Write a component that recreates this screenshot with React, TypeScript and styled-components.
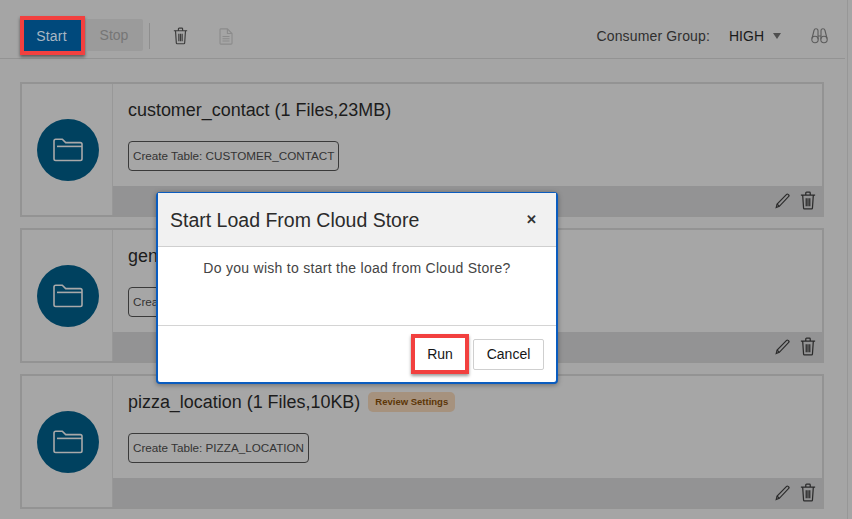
import styled, { createGlobalStyle } from "styled-components";

const jobs = [
  { name: "customer_contact (1 Files,23MB)", table: "CUSTOMER_CONTACT", review: false },
  { name: "generated_data (1 Files,4MB)", table: "GENERATED_DATA", review: false },
  { name: "pizza_location (1 Files,10KB)", table: "PIZZA_LOCATION", review: true },
];

function TrashIcon({ size = 16, stroke = "#2b2b2b" }: { size?: number; stroke?: string }) {
  return (
    <svg width={size} height={size * 1.17} viewBox="0 0 18 21" fill="none" stroke={stroke} strokeWidth="1.4">
      <path d="M1 4.5h16M6.5 4.5V2.2c0-.5.4-.9.9-.9h3.2c.5 0 .9.4.9.9v2.3" />
      <path d="M3 4.5l1 14.6c0 .6.5 1 1 1h8c.5 0 1-.4 1-1l1-14.6" />
      <path d="M7 8v9M9 8v9M11 8v9" />
    </svg>
  );
}

function PencilIcon() {
  return (
    <svg width="15" height="16" viewBox="0 0 15 16" fill="none" stroke="#2b2b2b" strokeWidth="1.2">
      <path d="M1.2 14.6l.9-3.6L11.6 1.3c.4-.4 1-.4 1.4 0l.7.7c.4.4.4 1 0 1.4L4.3 13.3z" />
      <path d="M2.1 11l2.2 2.3" />
    </svg>
  );
}

function FolderIcon() {
  return (
    <svg width="30" height="24" viewBox="0 0 30 24" fill="none" stroke="#a9a9a9" strokeWidth="1.6">
      <path d="M1 3c0-1 .7-1.8 1.7-1.8h6.6l3.4 3.4h14.6c.9 0 1.7.8 1.7 1.7v14.5c0 1-.8 1.7-1.7 1.700H2.7C1.700 22.500 1 21.800 1 20.800z" />
      <path d="M4 8.400h25" />
    </svg>
  );
}

function DocIcon() {
  return (
    <svg width="14" height="17" viewBox="0 0 14 17" fill="none" stroke="#8b8b8b" strokeWidth="1.1">
      <path d="M1 1.800c0-.5.4-.9.9-.9h6.500L13 5.500v9.700c0 .5-.4.9-.9.9H1.900c-.5 0-.9-.4-.9-.9z" />
      <path d="M8.400 1v4.500H13M3.500 8.500h7M3.500 10.800h7M3.500 13h7" />
    </svg>
  );
}

function BinocularsIcon() {
  return (
    <svg width="17" height="16" viewBox="0 0 17 16" fill="none" stroke="#5c5c5c" strokeWidth="1.1">
      <circle cx="4" cy="11.500" r="3.200" />
      <circle cx="13" cy="11.500" r="3.200" />
      <path d="M1 10.500L3 2.500C3.300 1.300 4 .8 5 .8s2 .7 2 2v8.500M16 10.500l-2-8C13.700 1.300 13 .8 12 .8s-2 .7-2 2v8.500M7 8h3" />
    </svg>
  );
}

export default function App() {
  return (
    <>
      <GlobalStyle />
      <Page>
        <Toolbar>
          <StartButton>Start</StartButton>
          <StopButton>Stop</StopButton>
          <Separator />
          <ToolIcon>
            <TrashIcon size={15} stroke="#3c3c3c" />
          </ToolIcon>
          <ToolIcon>
            <DocIcon />
          </ToolIcon>
          <GroupLabel>Consumer Group:</GroupLabel>
          <GroupValue>HIGH</GroupValue>
          <Caret />
          <BinocularsSlot>
            <BinocularsIcon />
          </BinocularsSlot>
        </Toolbar>
        <CardList>
          {jobs.map((job) => (
            <Card key={job.table}>
              <CardSide>
                <FolderCircle>
                  <FolderIcon />
                </FolderCircle>
              </CardSide>
              <CardMain>
                <CardBody>
                  <TitleRow>
                    <CardTitle>{job.name}</CardTitle>
                    {job.review && <ReviewBadge>Review Settings</ReviewBadge>}
                  </TitleRow>
                  <TableTag>Create Table: {job.table}</TableTag>
                </CardBody>
                <CardFooter>
                  <PencilIcon />
                  <TrashIcon />
                </CardFooter>
              </CardMain>
            </Card>
          ))}
        </CardList>
        <Modal>
          <ModalHeader>
            <ModalTitle>Start Load From Cloud Store</ModalTitle>
            <CloseMark>✕</CloseMark>
          </ModalHeader>
          <ModalBody>Do you wish to start the load from Cloud Store?</ModalBody>
          <ModalFooter>
            <RunButton>Run</RunButton>
            <CancelButton>Cancel</CancelButton>
          </ModalFooter>
        </Modal>
      </Page>
    </>
  );
}

const GlobalStyle = createGlobalStyle`
  html, body {
    margin: 0;
    padding: 0;
    background: #a5a5a5;
    font-family: "Liberation Sans", Arial, sans-serif;
  }
`;

const Page = styled.div`
  position: relative;
  width: 848px;
  height: 519px;
  overflow: hidden;
  box-sizing: border-box;
  border-right: 1px solid #979797;
  background: #a5a5a5;
`;

const Toolbar = styled.div`
  display: flex;
  align-items: center;
  box-sizing: border-box;
  height: 59px;
  padding: 14px 20px 0 20px;
  margin-right: 2px;
  border-bottom: 1px solid #939393;
`;

const StartButton = styled.button`
  width: 65px;
  height: 39px;
  margin-top: -1px;
  box-sizing: border-box;
  border: 4px solid #f2403f;
  background: #00497c;
  color: #a9b7c3;
  font: 14px "Liberation Sans", Arial, sans-serif;
  letter-spacing: 0.2px;
  box-shadow: 0 2px 3px rgba(0, 0, 0, 0.45);
  padding: 0 2px 0 0;
`;

const StopButton = styled.button`
  width: 56px;
  height: 32px;
  margin-left: 2px;
  margin-top: -2px;
  border: 0;
  border-radius: 0 2px 2px 0;
  background: #9b9b9b;
  color: #767676;
  font: 14px "Liberation Sans", Arial, sans-serif;
  padding: 0 2px 0 0;
`;

const Separator = styled.div`
  width: 1px;
  height: 26px;
  margin-left: 6px;
  background: #8e8e8e;
`;

const ToolIcon = styled.span`
  display: flex;
  justify-content: center;
  width: 46px;
  margin-left: 0;
  &:first-of-type {
    margin-left: 7px;
  }
`;

const GroupLabel = styled.span`
  margin-left: auto;
  font-size: 14px;
  letter-spacing: 0.15px;
  color: #2f2f2f;
`;

const GroupValue = styled.span`
  margin-left: 19px;
  font-size: 14px;
  color: #1a1a1a;
`;

const Caret = styled.span`
  width: 0;
  height: 0;
  margin-left: 9px;
  border-left: 4px solid transparent;
  border-right: 4px solid transparent;
  border-top: 6px solid #4f4f4f;
`;

const BinocularsSlot = styled.span`
  display: flex;
  margin-left: 30px;
  margin-right: -3px;
`;

const CardList = styled.div`
  display: flex;
  flex-direction: column;
  gap: 11px;
  padding: 23px 0 0 20px;
`;

const Card = styled.div`
  display: flex;
  box-sizing: border-box;
  width: 804px;
  height: 135px;
  border: 2px solid #939393;
  background: #a6a6a6;
`;

const CardSide = styled.div`
  display: flex;
  align-items: center;
  justify-content: center;
  flex: 0 0 91px;
  padding-left: 2px;
  box-sizing: border-box;
  border-right: 1px solid #989898;
`;

const FolderCircle = styled.div`
  display: flex;
  align-items: center;
  justify-content: center;
  width: 62px;
  height: 62px;
  border-radius: 50%;
  background: #00415f;
`;

const CardMain = styled.div`
  display: flex;
  flex: 1;
  flex-direction: column;
`;

const CardBody = styled.div`
  flex: 1;
  padding: 14px 0 0 15px;
`;

const TitleRow = styled.div`
  display: flex;
  align-items: center;
  gap: 8px;
  height: 24px;
`;

const CardTitle = styled.span`
  font-size: 17.950px;
  color: #1c1c1c;
`;

const ReviewBadge = styled.span`
  padding: 0 7px;
  line-height: 20px;
  border-radius: 5px;
  background: #a6927e;
  color: #5c3607;
  font-size: 9.500px;
  font-weight: bold;
`;

const TableTag = styled.div`
  display: inline-block;
  margin-top: 19px;
  box-sizing: border-box;
  height: 30px;
  padding: 0 4px;
  border: 1px solid #3a3a3a;
  border-radius: 4px;
  color: #333;
  font-size: 11.700px;
  line-height: 28px;
`;

const CardFooter = styled.div`
  display: flex;
  flex: 0 0 29px;
  align-items: center;
  justify-content: flex-end;
  gap: 10px;
  padding-right: 6px;
  background: #939394;
`;

const Modal = styled.div`
  position: absolute;
  left: 156px;
  top: 192px;
  display: flex;
  flex-direction: column;
  box-sizing: border-box;
  width: 402px;
  height: 192px;
  border: 1px solid #0a5cbf;
  border-width: 1px 2px 2px 2px;
  border-radius: 4px;
  background: #fff;
  box-shadow: 0 1px 5px rgba(0, 0, 0, 0.35);
`;

const ModalHeader = styled.div`
  display: flex;
  align-items: center;
  justify-content: space-between;
  flex: 0 0 54px;
  box-sizing: border-box;
  padding: 1px 19px 0 12px;
  border-bottom: 1px solid #cfcfcf;
  background: #f1f1f1;
`;

const ModalTitle = styled.span`
  font-size: 19.500px;
  color: #2b2b2b;
`;

const CloseMark = styled.span`
  margin-bottom: 2px;
  font-size: 13px;
  font-weight: bold;
  color: #333;
`;

const ModalBody = styled.div`
  flex: 1;
  padding-top: 13px;
  text-align: center;
  font-size: 14px;
  letter-spacing: 0.28px;
  color: #444;
`;

const ModalFooter = styled.div`
  display: flex;
  align-items: center;
  justify-content: flex-end;
  gap: 4px;
  flex: 0 0 57px;
  box-sizing: border-box;
  padding-right: 12px;
  border-top: 1px solid #d4d4d4;
`;

const RunButton = styled.button`
  width: 58px;
  height: 40px;
  box-sizing: border-box;
  border: 4px solid #f2403f;
  background: #fff;
  color: #161616;
  font: 14px "Liberation Sans", Arial, sans-serif;
  box-shadow: 0 2px 3px rgba(0, 0, 0, 0.4);
  padding: 0;
`;

const CancelButton = styled.button`
  width: 71px;
  height: 31px;
  box-sizing: border-box;
  border: 1px solid #cfcfcf;
  border-radius: 2px;
  background: #fff;
  color: #161616;
  font: 14px "Liberation Sans", Arial, sans-serif;
  padding: 0;
`;
